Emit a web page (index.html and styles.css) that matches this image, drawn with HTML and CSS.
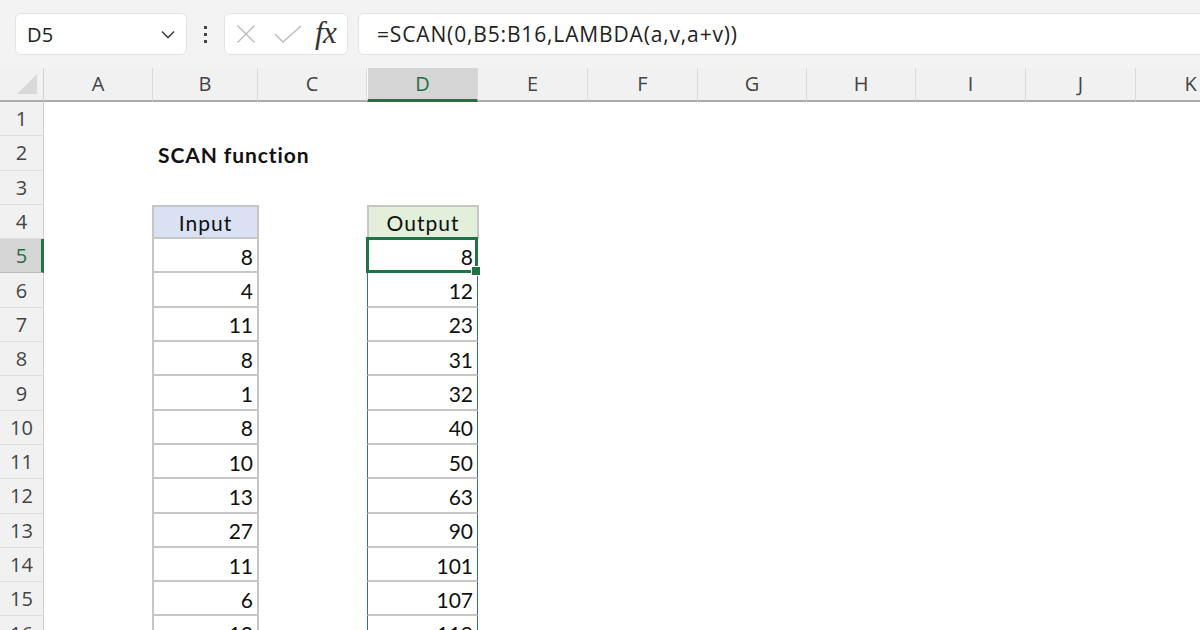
FILE: index.html
```html
<!DOCTYPE html>
<html>
<head>
<meta charset="utf-8">
<title>SCAN function</title>
<link rel="stylesheet" href="styles.css">
</head>
<body>
<div class="app">
  <div class="toolbar">
    <div class="namebox">
      <span class="name">D5</span>
      <svg class="chev" width="14" height="9" viewBox="0 0 14 9"><polyline points="1,1.5 7,7.5 13,1.5" fill="none" stroke="#444" stroke-width="1.6"/></svg>
    </div>
    <div class="dots"><i></i><i></i><i></i></div>
    <div class="fxbox">
      <svg class="icon-x" width="20" height="18" viewBox="0 0 20 18"><path d="M1.5 0.5 L18.5 17.5 M18.5 0.5 L1.5 17.5" stroke="#bcbcbc" stroke-width="1.4" fill="none"/></svg>
      <svg class="icon-check" width="28" height="18" viewBox="0 0 28 18"><polyline points="1,9 9,17 27,1" stroke="#bcbcbc" stroke-width="1.4" fill="none"/></svg>
      <span class="fx">fx</span>
    </div>
    <div class="formula">=SCAN(0,B5:B16,LAMBDA(a,v,a+v))</div>
  </div>

  <div class="sheet">
    <div class="hrow">
      <div class="corner"><svg width="20" height="20" viewBox="0 0 20 20"><polygon points="20,0 20,20 0,20" fill="#d9d9d9"/></svg></div>
      <div class="ch">A</div><div class="ch">B</div><div class="ch">C</div><div class="ch ch-sel">D</div><div class="ch">E</div><div class="ch">F</div><div class="ch">G</div><div class="ch">H</div><div class="ch">I</div><div class="ch">J</div><div class="ch">K</div>
    </div>

    <div class="row"><div class="rh">1</div></div>
    <div class="row"><div class="rh">2</div><div class="c"></div><div class="c title">SCAN function</div></div>
    <div class="row"><div class="rh">3</div></div>
    <div class="row"><div class="rh">4</div><div class="c"></div><div class="c in in-h">Input</div><div class="c"></div><div class="c out-h">Output</div></div>
    <div class="row"><div class="rh rh-sel">5</div><div class="c"></div><div class="c in">8</div><div class="c"></div><div class="c out active">8</div></div>
    <div class="row"><div class="rh">6</div><div class="c"></div><div class="c in">4</div><div class="c"></div><div class="c out">12</div></div>
    <div class="row"><div class="rh">7</div><div class="c"></div><div class="c in">11</div><div class="c"></div><div class="c out">23</div></div>
    <div class="row"><div class="rh">8</div><div class="c"></div><div class="c in">8</div><div class="c"></div><div class="c out">31</div></div>
    <div class="row"><div class="rh">9</div><div class="c"></div><div class="c in">1</div><div class="c"></div><div class="c out">32</div></div>
    <div class="row"><div class="rh">10</div><div class="c"></div><div class="c in">8</div><div class="c"></div><div class="c out">40</div></div>
    <div class="row"><div class="rh">11</div><div class="c"></div><div class="c in">10</div><div class="c"></div><div class="c out">50</div></div>
    <div class="row"><div class="rh">12</div><div class="c"></div><div class="c in">13</div><div class="c"></div><div class="c out">63</div></div>
    <div class="row"><div class="rh">13</div><div class="c"></div><div class="c in">27</div><div class="c"></div><div class="c out">90</div></div>
    <div class="row"><div class="rh">14</div><div class="c"></div><div class="c in">11</div><div class="c"></div><div class="c out">101</div></div>
    <div class="row"><div class="rh">15</div><div class="c"></div><div class="c in">6</div><div class="c"></div><div class="c out">107</div></div>
    <div class="row"><div class="rh">16</div><div class="c"></div><div class="c in">12</div><div class="c"></div><div class="c out">119</div></div>
  </div>
</div>
</body>
</html>
```

FILE: styles.css
```css
html, body {
  margin: 0;
  padding: 0;
  width: 1200px;
  height: 630px;
  overflow: hidden;
  background: #ffffff;
}

.app {
  width: 1200px;
  height: 630px;
  overflow: hidden;
  font-family: "Open Sans", "Noto Sans", sans-serif;
}

/* ---------- formula bar ---------- */
.toolbar {
  height: 68px;
  background: #f3f3f3;
  display: flex;
  align-items: center;
  padding-left: 15px;
  box-sizing: border-box;
}

.namebox,
.fxbox,
.formula {
  height: 42px;
  box-sizing: border-box;
  background: #ffffff;
  border: 1px solid #e3e3e3;
  border-radius: 6px;
  display: flex;
  align-items: center;
}

.namebox {
  width: 172px;
  padding: 0 11px 0 11px;
  justify-content: space-between;
}

.name {
  font-size: 20px;
  color: #222;
  letter-spacing: 0.2px;
}

.chev {
  display: block;
}

.dots {
  width: 37px;
  display: flex;
  flex-direction: column;
  align-items: center;
  gap: 4px;
}

.dots i {
  display: block;
  width: 3px;
  height: 3px;
  background: #444;
}

.fxbox {
  width: 124px;
  padding: 0 0 0 11px;
}

.icon-x {
  display: block;
}

.icon-check {
  display: block;
  margin-left: 18px;
}

.fx {
  margin-left: 13px;
  font-family: "Liberation Serif", "DejaVu Serif", serif;
  font-style: italic;
  font-size: 31px;
  color: #333;
  line-height: 1;
  margin-top: -4px;
  letter-spacing: -0.5px;
}

.formula {
  flex: 1;
  margin-left: 10px;
  margin-right: -20px;
  padding-left: 18px;
  font-size: 21px;
  color: #222;
  letter-spacing: 0.85px;
  white-space: nowrap;
}

/* ---------- grid ---------- */
.sheet {
  --cols: 44px 109px 105px 109px 111px 110px 110px 109px 109px 110px 110px 110px;
  width: 1246px;
}

.hrow {
  display: grid;
  grid-template-columns: var(--cols);
  height: 34px;
  background: #f1f1f1;
}

.corner,
.ch {
  box-sizing: border-box;
  border-right: 1px solid #dadada;
  border-bottom: 2px solid #ababab;
}

.corner {
  display: flex;
  align-items: flex-end;
  justify-content: flex-end;
  padding: 0 6px 6px 0;
  border-right-color: #d2d2d2;
}

.corner svg {
  display: block;
}

.ch {
  display: flex;
  align-items: center;
  justify-content: center;
  font-size: 20px;
  color: #444;
  padding-bottom: 1px;
}

.ch-sel {
  background: #d5d5d5;
  color: #1e6f43;
  border-bottom: 3px solid #217346;
  border-left: 1px solid #fafafa;
}

.row {
  display: grid;
  grid-template-columns: var(--cols);
  height: 34.3px;
}

.rh {
  box-sizing: border-box;
  background: #f1f1f1;
  border-right: 1px solid #d0d0d0;
  border-bottom: 1px solid #dedede;
  display: flex;
  align-items: center;
  justify-content: center;
  font-size: 20px;
  color: #444;
}

.rh-sel {
  background: #d5d5d5;
  color: #1e6f43;
  border-right: 3px solid #217346;
  border-bottom-color: #bdbdbd;
  padding-left: 2px;
}

.c {
  position: relative;
  box-sizing: border-box;
  display: flex;
  align-items: center;
  justify-content: flex-end;
  padding: 2px 4px 0 4px;
  font-family: "Lato", "Carlito", sans-serif;
  font-size: 21px;
  color: #111;
  white-space: nowrap;
}

.title {
  justify-content: flex-start;
  padding-left: 5px;
  font-weight: 700;
  letter-spacing: 0.9px;
  overflow: visible;
}

.in {
  margin: 0 -1px;
  border-left: 2px solid #c6c6c6;
  border-right: 2px solid #c6c6c6;
  border-bottom: 2px solid #c6c6c6;
}

.in-h {
  justify-content: center;
  background: #d9e1f2;
  border-top: 2px solid #c6c6c6;
  padding-top: 1px;
  letter-spacing: 1px;
}

.out-h {
  justify-content: center;
  background: #e2efda;
  border: 2px solid #c6c6c6;
  padding-top: 1px;
  margin-right: -1px;
  letter-spacing: 1px;
}

.out {
  border-left: 1px solid #3467cc;
  border-right: 1px solid #3467cc;
  border-bottom: 2px solid #c6c6c6;
}

.active::after {
  content: "";
  position: absolute;
  left: -2px;
  top: -2px;
  right: -1px;
  bottom: -2px;
  border: 3px solid #217346;
}

.active::before {
  content: "";
  position: absolute;
  right: -4px;
  bottom: -5px;
  width: 8px;
  height: 8px;
  background: #217346;
  border: 1px solid #ffffff;
  z-index: 2;
}
```
